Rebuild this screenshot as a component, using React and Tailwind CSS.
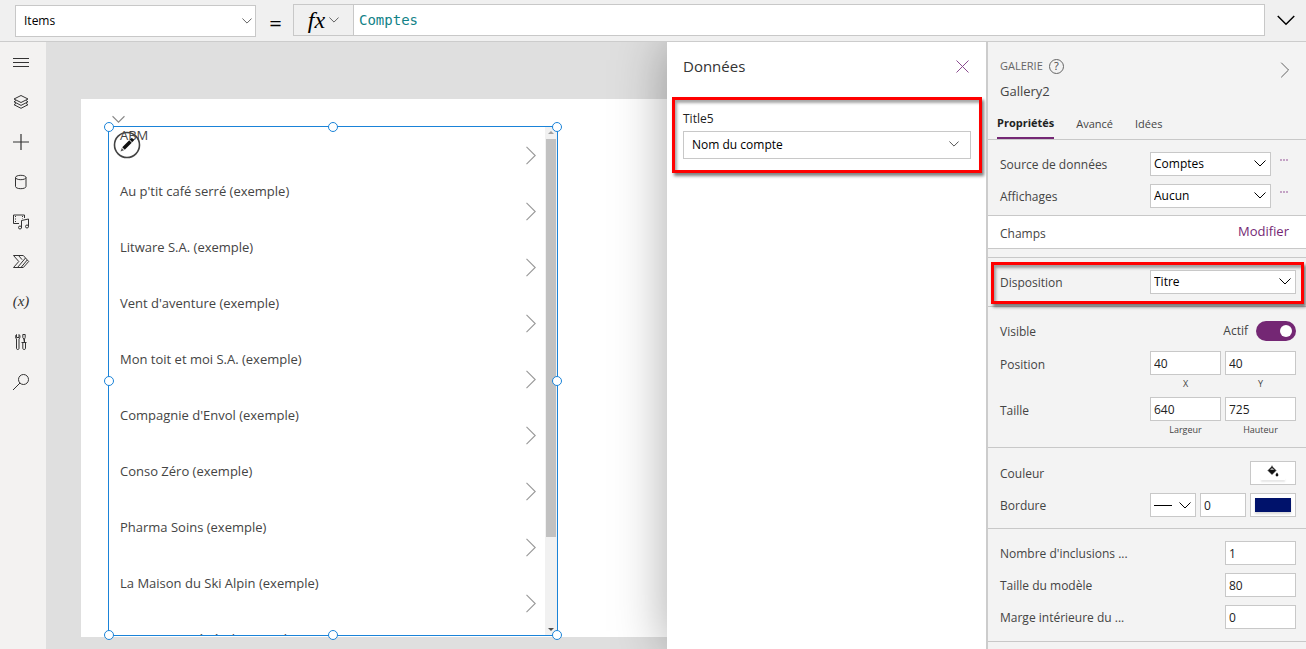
import React, { useState } from "react";

const accounts = [
  "ABM",
  "Au p'tit café serré (exemple)",
  "Litware S.A. (exemple)",
  "Vent d'aventure (exemple)",
  "Mon toit et moi S.A. (exemple)",
  "Compagnie d'Envol (exemple)",
  "Conso Zéro (exemple)",
  "Pharma Soins (exemple)",
  "La Maison du Ski Alpin (exemple)",
  "Commerce général (exemple)",
];

const handles = [
  "left-0 top-0",
  "left-1/2 top-0",
  "left-full top-0",
  "left-0 top-1/2",
  "left-full top-1/2",
  "left-0 top-full",
  "left-1/2 top-full",
  "left-full top-full",
];

const Chevron = ({ className, width = 1 }) => (
  <svg viewBox="0 0 12 7" fill="none" stroke="currentColor" strokeWidth={width} className={className}>
    <path d="M0.5 0.5 L6 6 L11.5 0.5" />
  </svg>
);

const ChevronRight = ({ className }) => (
  <svg viewBox="0 0 10 19" fill="none" stroke="currentColor" strokeWidth="1.1" className={className}>
    <path d="M0.5 0.8 L9.2 9.5 L0.5 18.2" />
  </svg>
);

const railItems = [
  { name: "Menu", icon: <path d="M2 6.5h16M2 10.5h16M2 14.5h16" /> },
  {
    name: "Arborescence",
    icon: (
      <path d="M10 3.5l7 3.5-7 3.5-7-3.5zM5 8.5l-2 1.3 7 3.6 7-3.6-2-1.3M5 11.4l-2 1.3 7 3.6 7-3.6-2-1.3" />
    ),
  },
  { name: "Insérer", icon: <path d="M10 2v16M2 10h16" strokeWidth="1.2" /> },
  {
    name: "Données",
    icon: (
      <path d="M4.5 5.5v9c0 1.2 2.4 2.2 5.3 2.2s5.2-1 5.2-2.2v-9M4.5 5.5c0-1.2 2.4-2.2 5.3-2.2s5.2 1 5.2 2.2-2.3 2.2-5.2 2.2-5.3-1-5.3-2.2z" />
    ),
  },
  {
    name: "Média",
    icon: (
      <>
        <path d="M8 11.5H2.5v-8.5h11v3M10.5 16V8.5l7-1.5v7.5" />
        <path d="M4.5 4v7M11.5 4v3" strokeDasharray="1 1.5" />
        <circle cx="9" cy="15.5" r="1.5" />
        <circle cx="16" cy="14.5" r="1.5" />
      </>
    ),
  },
  {
    name: "Power Automate",
    icon: <path d="M2.5 3.5h9.8l5.4 6-5.4 6H2.5l5.3-6zM7.5 3.5l3.6 4.2M14.5 6L6.5 15.5M16.2 8L10 15.5" />,
  },
  {
    name: "Variables",
    icon: (
      <text
        x="10"
        y="14"
        textAnchor="middle"
        stroke="none"
        fill="currentColor"
        fontSize="15"
        fontStyle="italic"
        fontFamily="Liberation Serif, serif"
      >
        (x)
      </text>
    ),
  },
  {
    name: "Outils",
    icon: (
      <>
        <path d="M5.5 2.5v3h2.5v-3c1.2.8 1.5 3.2 0 4.5v9.5c0 1.3-2.5 1.3-2.5 0V7c-1.5-1.3-1.2-3.7 0-4.5z" />
        <path d="M11.8 2.5h2.4v3l-.7 1.5v3.500l-.7-3.500-1-1.500zM10.500 10.500h5M11.800 10.500v6c0 1.300 2.700 1.300 2.700 0v-6" />
      </>
    ),
  },
  {
    name: "Rechercher",
    icon: (
      <>
        <circle cx="12.5" cy="7.5" r="5" />
        <path d="M9 11L2 18" />
      </>
    ),
  },
];

const FormulaBar = () => {
  const [formula, setFormula] = useState("Comptes");

  return (
    <header className="relative z-10 flex h-[42px] shrink-0 items-start border-b border-[#ccc] bg-[#f0f0f0] pl-[15px]">
      <div className="relative mt-[5px] w-[241px]">
        <select
          aria-label="Propriété"
          className="h-8 w-full appearance-none border border-[#c8c8c8] bg-white pl-2 text-xs text-black"
        >
          <option>Items</option>
        </select>
        <Chevron className="pointer-events-none absolute right-1 top-3 h-2 w-[10px] text-[#444]" />
      </div>
      <span className="mt-[6px] w-[37px] pl-[2px] text-center text-[22px] leading-8 text-black">=</span>
      <button
        aria-label="Fonction"
        className="mt-1 flex h-8 w-[61px] items-center justify-center gap-1 border border-[#c8c8c8] text-black"
      >
        <span className="font-['Liberation_Serif',serif] text-2xl leading-6 italic">fx</span>
        <Chevron className="h-2 w-[10px] text-[#444]" />
      </button>
      <input
        aria-label="Formule"
        value={formula}
        onChange={(e) => setFormula(e.target.value)}
        className="-ml-px mt-1 h-8 min-w-0 flex-1 border border-[#c8c8c8] bg-white px-[5px] font-['DejaVu_Sans_Mono',monospace] text-sm text-[#128287]"
      />
      <button aria-label="Développer" className="flex h-10 w-[41px] items-center justify-center text-black">
        <Chevron className="h-[11px] w-[18px]" />
      </button>
    </header>
  );
};

const Rail = () => (
  <nav className="flex w-[46px] shrink-0 flex-col items-center bg-[#f3f2f1] pr-1">
    {railItems.map((item) => (
      <button key={item.name} aria-label={item.name} className="flex h-10 w-full items-center justify-center">
        <svg viewBox="0 0 20 20" fill="none" stroke="currentColor" className="h-5 w-5 text-[#333]">
          {item.icon}
        </svg>
      </button>
    ))}
  </nav>
);

const Gallery = () => (
  <div className="relative h-[510px] w-[450px] border border-[#1a83d8]">
    <div className="flex h-full overflow-hidden">
      <ul className="flex-1 pl-[11px] pr-2">
        {accounts.map((name) => (
          <li key={name} className="flex h-14 justify-between">
            <span className="text-[13px] leading-4 text-[#444]">{name}</span>
            <ChevronRight className="mt-[19px] h-[19px] w-3 text-[#999]" />
          </li>
        ))}
      </ul>
      <div className="flex w-3 flex-col items-center bg-[#f1f1f1]">
        <span className="mb-[5px] mt-1 border-x-[3px] border-b-[3px] border-x-transparent border-b-[#a0a0a0]" />
        <span className="mb-auto h-[398px] w-[10px] bg-[#c1c1c1]" />
        <span className="my-1 border-x-[3px] border-t-[3px] border-x-transparent border-t-[#505050]" />
      </div>
    </div>
    <svg viewBox="0 0 28 28" className="absolute left-1 top-1 h-7 w-7">
      <circle cx="14" cy="14" r="12.5" fill="none" stroke="#444" strokeWidth="1.6" />
      <path d="M10.5 17.5L17.5 10.5" stroke="#111" strokeWidth="3.6" />
      <path d="M18 10L20 8" stroke="#111" strokeWidth="3.2" />
      <path d="M7.5 20.5l1.3-3.5 2.2 2.2z" fill="#555" />
    </svg>
    {handles.map((pos) => (
      <span
        key={pos}
        className={`absolute h-[10px] w-[10px] -translate-x-1/2 -translate-y-1/2 rounded-full border border-[#1a83d8] bg-white ${pos}`}
      />
    ))}
  </div>
);

const Canvas = () => (
  <main className="min-w-0 flex-1 overflow-hidden bg-[#dfdfdf] pl-[35px] pt-[57px]">
    <div className="h-[538px] bg-white pl-[27px] pt-[14px]">
      <Chevron className="ml-1 h-[13px] w-[13px] text-[#888]" />
      <Gallery />
    </div>
  </main>
);

const DataPane = () => (
  <aside className="relative w-[319px] shrink-0 bg-white shadow-[0_0_50px_rgba(0,0,0,0.34)]">
    <div className="flex items-center justify-between pl-4 pr-[17px] pt-3">
      <h2 className="text-[15px] leading-6 text-[#333]">Données</h2>
      <button aria-label="Fermer" className="text-[#8a4a8f]">
        <svg viewBox="0 0 13 13" fill="none" stroke="currentColor" className="h-[13px] w-[13px]">
          <path d="M0.5 0.5l12 12M12.5 0.5l-12 12" />
        </svg>
      </button>
    </div>
    <div className="ml-[5px] mr-1 mt-[19px] h-[76px] border-[3px] border-[#f00] px-2 pt-[10px] shadow-[2px_3px_3px_rgba(0,0,0,0.5),inset_2px_3px_3px_rgba(0,0,0,0.35)]">
      <label htmlFor="title5" className="block text-xs leading-[18px] text-[#222]">
        Title5
      </label>
      <div className="relative mt-[3px]">
        <select
          id="title5"
          className="h-7 w-full appearance-none border border-[#c8c8c8] bg-white pl-2 text-xs text-black"
        >
          <option>Nom du compte</option>
        </select>
        <Chevron className="pointer-events-none absolute right-3 top-[9px] h-2 w-[10px] text-[#333]" />
      </div>
    </div>
  </aside>
);

const Row = ({ label, htmlFor, children }) => (
  <div className="flex h-8 items-center justify-between">
    <label htmlFor={htmlFor} className="pt-[2px]">
      {label}
    </label>
    {children}
  </div>
);

const PropSelect = ({ id, value }) => (
  <div className="relative flex-1">
    <select
      id={id}
      className="block h-6 w-full appearance-none border border-[#c8c8c8] bg-white pl-[3px] text-xs text-black"
    >
      <option>{value}</option>
    </select>
    <Chevron className="pointer-events-none absolute right-[5px] top-2 h-[7px] w-3 text-black" />
  </div>
);

const MoreButton = ({ label }) => (
  <button aria-label={label} className="-mt-2 flex w-3 items-center gap-px pl-px">
    <span className="h-[2px] w-[2px] bg-[#c4a3c5]" />
    <span className="h-[2px] w-[2px] bg-[#c4a3c5]" />
    <span className="h-[2px] w-[2px] bg-[#c4a3c5]" />
  </button>
);

const NumberBox = ({ id, value, caption }) => (
  <div className="w-[71px]">
    <input
      id={id}
      defaultValue={value}
      className="block h-6 w-full border border-[#c8c8c8] bg-white px-[3px] text-xs text-[#222]"
    />
    {caption && (
      <label htmlFor={id} className="block text-center text-[9px] leading-[18px] text-[#444]">
        {caption}
      </label>
    )}
  </div>
);

const Properties = () => {
  const [visible, setVisible] = useState(true);

  return (
    <aside className="relative z-10 w-80 shrink-0 border-l-2 border-[#ccc] bg-[#f3f3f3] text-xs text-[#444]">
      <div className="flex items-center justify-between pl-3 pr-4 pt-3">
        <div className="flex items-center gap-[6px]">
          <span className="text-[11px] leading-5 text-[#666]">GALERIE</span>
          <button aria-label="Aide" className="h-[15px] w-[15px] rounded-full border border-[#666] text-[11px] leading-3">
            ?
          </button>
        </div>
        <button aria-label="Réduire" className="pt-2 text-[#555]">
          <ChevronRight className="h-4 w-[10px]" />
        </button>
      </div>
      <h1 className="pl-3 text-[13px] leading-[26px] text-[#444]">Gallery2</h1>
      <div className="flex gap-[22px] border-b border-[#c8c8c8] pl-[9px] pt-[9px] text-[11px]" role="tablist">
        <button role="tab" aria-selected="true" className="border-b-2 border-[#742774] pb-1 font-bold leading-5 text-[#222]">
          Propriétés
        </button>
        <button role="tab" aria-selected="false" className="pb-1 leading-5">
          Avancé
        </button>
        <button role="tab" aria-selected="false" className="pb-1 leading-5">
          Idées
        </button>
      </div>

      <section className="pb-[3px] pl-3 pr-[15px] pt-2">
        <Row label="Source de données" htmlFor="source">
          <div className="flex w-[141px] items-center gap-2">
            <PropSelect id="source" value="Comptes" />
            <MoreButton label="Options de la source" />
          </div>
        </Row>
        <Row label="Affichages" htmlFor="views">
          <div className="flex w-[141px] items-center gap-2">
            <PropSelect id="views" value="Aucun" />
            <MoreButton label="Options des affichages" />
          </div>
        </Row>
      </section>

      <section className="flex h-[34px] items-center justify-between border-y border-[#c8c8c8] bg-white pl-3 pr-[17px]">
        <span className="pt-1">Champs</span>
        <button className="text-[13px] text-[#742774]">Modifier</button>
      </section>

      <section className="mt-2 h-[50px] border-y border-[#c8c8c8] pl-[3px] pr-[2px] pt-1">
        <div className="h-[42px] border-[3px] border-[#f00] pl-[6px] pr-[5px] pt-px shadow-[2px_3px_3px_rgba(0,0,0,0.5),inset_2px_3px_3px_rgba(0,0,0,0.35)]">
          <Row label="Disposition" htmlFor="layout">
            <div className="flex w-[146px]">
              <PropSelect id="layout" value="Titre" />
            </div>
          </Row>
        </div>
      </section>

      <section className="border-b border-[#c8c8c8] pb-2 pl-3 pr-[10px] pt-2">
        <Row label="Visible" htmlFor="visible">
          <div className="flex items-center gap-2">
            <span>{visible ? "Actif" : "Inactif"}</span>
            <input
              id="visible"
              type="checkbox"
              checked={visible}
              onChange={(e) => setVisible(e.target.checked)}
              className="h-5 w-10 appearance-none rounded-full bg-[#999] p-1 before:block before:h-3 before:w-3 before:rounded-full before:bg-white checked:bg-[#742774] checked:before:ml-auto"
            />
          </div>
        </Row>
        <div className="flex justify-between pt-1">
          <span className="pt-[6px]">Position</span>
          <div className="flex gap-1">
            <NumberBox id="x" value="40" caption="X" />
            <NumberBox id="y" value="40" caption="Y" />
          </div>
        </div>
        <div className="flex justify-between pt-1">
          <span className="pt-[6px]">Taille</span>
          <div className="flex gap-1">
            <NumberBox id="width" value="640" caption="Largeur" />
            <NumberBox id="height" value="725" caption="Hauteur" />
          </div>
        </div>
      </section>

      <section className="border-b border-[#c8c8c8] pb-[7px] pl-3 pr-[10px] pt-[9px]">
        <Row label="Couleur" htmlFor="fill">
          <button
            id="fill"
            className="flex h-6 w-[46px] flex-col items-center border border-[#c8c8c8] bg-white pt-[3px]"
          >
            <svg viewBox="0 0 12 12" className="h-3 w-3">
              <path d="M5 0.5v3M5 1.5L9 5.5L5 9.5L1 5.5z" fill="#111" stroke="#111" strokeWidth="0.6" />
              <path d="M5 2.8L7.3 5H3z" fill="#aaa" />
              <path d="M10 7.5c.8 1.2 1.4 1.8 1.4 2.6a1.4 1.4 0 0 1-2.8 0c0-.8.6-1.4 1.4-2.6z" fill="#111" />
            </svg>
            <span className="h-[3px] w-6 bg-white shadow-[0_2px_2px_rgba(0,0,0,0.1)]" />
          </button>
        </Row>
        <Row label="Bordure" htmlFor="border">
          <div className="flex gap-1">
            <button
              aria-label="Style de bordure"
              className="flex h-6 w-[46px] items-center justify-between border border-[#c8c8c8] bg-white pl-[3px] pr-1 text-black"
            >
              <span className="h-px w-[18px] bg-black" />
              <Chevron className="h-[7px] w-3" />
            </button>
            <input
              id="border"
              defaultValue="0"
              className="h-6 w-[46px] border border-[#c8c8c8] bg-white px-[3px] text-xs text-[#222]"
            />
            <button aria-label="Couleur de bordure" className="h-6 w-[46px] border border-[#c8c8c8] bg-white p-1">
              <span className="block h-[14px] bg-[#00126b] shadow-[0_2px_2px_rgba(0,0,0,0.15)]" />
            </button>
          </div>
        </Row>
      </section>

      <section className="border-b border-[#c8c8c8] pb-2 pl-3 pr-[10px] pt-2">
        <Row label="Nombre d'inclusions ..." htmlFor="wrap">
          <NumberBox id="wrap" value="1" />
        </Row>
        <Row label="Taille du modèle" htmlFor="template">
          <NumberBox id="template" value="80" />
        </Row>
        <Row label="Marge intérieure du ..." htmlFor="padding">
          <NumberBox id="padding" value="0" />
        </Row>
      </section>
    </aside>
  );
};

const App = () => (
  <div className="flex h-screen flex-col overflow-hidden font-['Open_Sans',sans-serif]">
    <FormulaBar />
    <div className="flex min-h-0 flex-1">
      <Rail />
      <Canvas />
      <DataPane />
      <Properties />
    </div>
  </div>
);

export default App;
